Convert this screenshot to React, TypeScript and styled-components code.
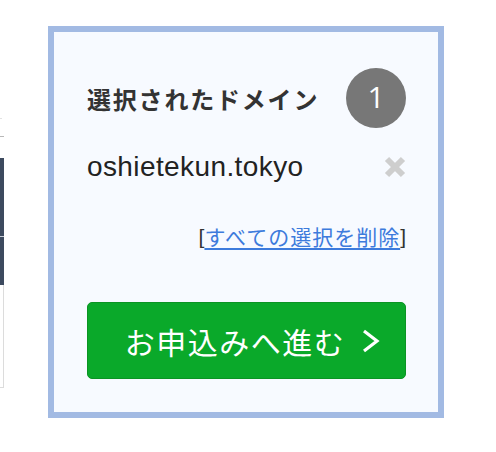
import React from "react";
import styled, { createGlobalStyle } from "styled-components";

const GlobalStyle = createGlobalStyle`
  html, body { margin: 0; padding: 0; background: #ffffff; }
  body { font-family: "Noto Sans CJK JP", "Noto Sans", sans-serif; }
`;

const Page = styled.div`
  display: flex;
  align-items: flex-start;
  padding-top: 26px;
  width: 496px;
  height: 452px;
  box-sizing: border-box;
`;

const Stub = styled.div`
  display: flex;
  flex-direction: column;
  width: 4px;
  margin-right: 44px;
  padding-top: 92px;
`;

const Tick = styled.div<{ $w: number; $gap: number; $color: string }>`
  width: ${(p) => p.$w}px;
  height: 1px;
  margin-top: ${(p) => p.$gap}px;
  background: ${(p) => p.$color};
`;

const DarkBlock = styled.div<{ $h: number; $gap?: number }>`
  height: ${(p) => p.$h}px;
  margin-top: ${(p) => p.$gap ?? 0}px;
  background: #3d4a5f;
`;

const Divider = styled.div`
  height: 1px;
  background: #c9ced8;
`;

const LightBox = styled.div`
  height: 103px;
  box-sizing: border-box;
  background: #fff;
  border-right: 1px solid #dcdcdc;
  border-bottom: 1px solid #dcdcdc;
`;

const Panel = styled.section`
  width: 396px;
  height: 392px;
  box-sizing: border-box;
  border: 6px solid #a2bae3;
  background: #f7faff;
  padding: 36px 32px 0 33px;
  display: flex;
  flex-direction: column;
`;

const Header = styled.div`
  display: flex;
  align-items: center;
  justify-content: space-between;
  height: 60px;
`;

const Title = styled.h2`
  margin: 0;
  font-family: "Noto Sans CJK JP", sans-serif;
  font-weight: 700;
  font-size: 24px;
  letter-spacing: 1.8px;
  color: #333333;
  line-height: 1;
  padding-top: 2px;
`;

const Badge = styled.div`
  width: 60px;
  height: 60px;
  border-radius: 50%;
  background: #777777;
  color: #ffffff;
  display: flex;
  align-items: center;
  justify-content: center;
  font-family: "Open Sans", "Liberation Sans", sans-serif;
  font-weight: 400;
  font-size: 30px;
  line-height: 1;
  padding-bottom: 2px;
  box-sizing: border-box;
`;

const DomainRow = styled.div`
  display: flex;
  align-items: center;
  justify-content: space-between;
  height: 30px;
  margin-top: 24px;
`;

const DomainName = styled.span`
  font-family: "Liberation Sans", Arial, sans-serif;
  font-size: 28px;
  letter-spacing: 0.4px;
  color: #222222;
  line-height: 1;
`;

const RemoveButton = styled.button`
  border: 0;
  padding: 0;
  background: transparent;
  width: 22px;
  height: 22px;
  display: flex;
  align-items: center;
  justify-content: center;
  cursor: pointer;
`;

const LinkRow = styled.div`
  margin-top: 42px;
  height: 24px;
  display: flex;
  justify-content: flex-end;
  align-items: center;
  font-family: "Liberation Sans", "Noto Sans CJK JP", sans-serif;
  font-size: 21px;
  color: #333333;
  line-height: 1;
`;

const ClearLink = styled.a`
  font-family: "Noto Sans CJK JP", sans-serif;
  color: #3d7bdc;
  letter-spacing: 1px;
  text-decoration: underline;
  text-underline-offset: 3px;
  cursor: pointer;
`;

const ProceedButton = styled.button`
  margin-top: 54px;
  width: 100%;
  height: 77px;
  box-sizing: border-box;
  border: 1px solid #0b9424;
  border-radius: 5px;
  background: #0aa92a;
  color: #ffffff;
  display: flex;
  align-items: center;
  justify-content: center;
  gap: 16px;
  padding: 0 0 0 12px;
  font-family: "Noto Sans CJK JP", sans-serif;
  font-size: 30px;
  letter-spacing: 1.5px;
  line-height: 1;
  cursor: pointer;
`;

const CloseIcon = () => (
  <svg width="22" height="22" viewBox="0 0 22 22">
    <path d="M3 3 L19 19 M19 3 L3 19" stroke="#cecece" strokeWidth="6" fill="none" />
  </svg>
);

const Chevron = () => (
  <svg width="19" height="24" viewBox="0 0 19 24">
    <polyline points="3,2 16,12 3,22" stroke="#ffffff" strokeWidth="3.2" fill="none" strokeLinejoin="miter" />
  </svg>
);

export default function App() {
  return (
    <>
      <GlobalStyle />
      <Page>
        <Stub>
          <Tick $w={2} $gap={0} $color="#e2e2e2" />
          <Tick $w={4} $gap={17} $color="#b8b8b8" />
          <DarkBlock $h={78} $gap={21} />
          <Divider />
          <DarkBlock $h={48} />
          <LightBox />
        </Stub>
        <Panel>
          <Header>
            <Title>選択されたドメイン</Title>
            <Badge>1</Badge>
          </Header>
          <DomainRow>
            <DomainName>oshietekun.tokyo</DomainName>
            <RemoveButton aria-label="削除">
              <CloseIcon />
            </RemoveButton>
          </DomainRow>
          <LinkRow>
            [<ClearLink>すべての選択を削除</ClearLink>]
          </LinkRow>
          <ProceedButton>
            <span>お申込みへ進む</span>
            <Chevron />
          </ProceedButton>
        </Panel>
      </Page>
    </>
  );
}
